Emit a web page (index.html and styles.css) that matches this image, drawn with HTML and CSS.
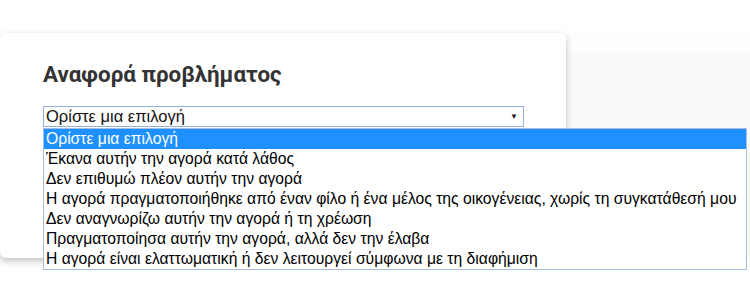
FILE: index.html
```html
<!DOCTYPE html>
<html lang="el">
<head>
<meta charset="utf-8">
<link rel="stylesheet" href="styles.css">
</head>
<body>
<div class="stage">
  <div class="card">
    <h2 class="title">Αναφορά προβλήματος</h2>
    <div class="select-wrap">
      <div class="select">
        <span class="select-text">Ορίστε μια επιλογή</span>
        <span class="arrow">▼</span>
      </div>
      <ul class="listbox">
        <li class="opt active">Ορίστε μια επιλογή</li>
        <li class="opt">Έκανα αυτήν την αγορά κατά λάθος</li>
        <li class="opt">Δεν επιθυμώ πλέον αυτήν την αγορά</li>
        <li class="opt">Η αγορά πραγματοποιήθηκε από έναν φίλο ή ένα μέλος της οικογένειας, χωρίς τη συγκατάθεσή μου</li>
        <li class="opt">Δεν αναγνωρίζω αυτήν την αγορά ή τη χρέωση</li>
        <li class="opt">Πραγματοποίησα αυτήν την αγορά, αλλά δεν την έλαβα</li>
        <li class="opt">Η αγορά είναι ελαττωματική ή δεν λειτουργεί σύμφωνα με τη διαφήμιση</li>
      </ul>
    </div>
  </div>
  <div class="side">
    <div class="side-band"></div>
  </div>
</div>
</body>
</html>
```
FILE: styles.css
```css
html, body {
  margin: 0;
  padding: 0;
  background: #ffffff;
}
body {
  width: 750px;
  height: 290px;
  overflow: hidden;
  font-family: "Liberation Sans", Arial, sans-serif;
}
.stage {
  display: flex;
  padding-top: 33px;
  height: 235px;
}
.card {
  position: relative;
  z-index: 2;
  width: 566px;
  height: 225px;
  box-sizing: border-box;
  padding: 28px 0 0 43px;
  background: #ffffff;
  border-radius: 6px;
  box-shadow: 0 3px 7px rgba(0, 0, 0, 0.25);
}
.title {
  margin: 0 0 18px 0;
  font-family: Roboto, "Liberation Sans", sans-serif;
  font-weight: 700;
  font-size: 22.4px;
  line-height: 27px;
  color: #333333;
}
.select-wrap {
  position: relative;
  width: 481px;
}
.select {
  display: flex;
  align-items: center;
  justify-content: space-between;
  height: 21px;
  box-sizing: border-box;
  border: 1px solid #8fb0e0;
  padding: 0 5px 0 2px;
  font-size: 16.5px;
  color: #111;
}
.arrow {
  font-size: 8px;
  color: #222;
}
.listbox {
  position: absolute;
  top: 22px;
  left: 0;
  width: 702px;
  margin: 0;
  padding: 0;
  list-style: none;
  background: #ffffff;
  border: 1px solid #a8bde0;
  z-index: 5;
}
.opt {
  height: 20px;
  line-height: 20px;
  padding-left: 2px;
  font-size: 15.7px;
  color: #000;
  white-space: nowrap;
}
.opt.active {
  background: #1e90ff;
  color: #ffffff;
}
.side {
  flex: 1;
  height: 225px;
  background: #fafafa;
}
.side-band {
  height: 17px;
  background: #fdfdfd;
}
```
